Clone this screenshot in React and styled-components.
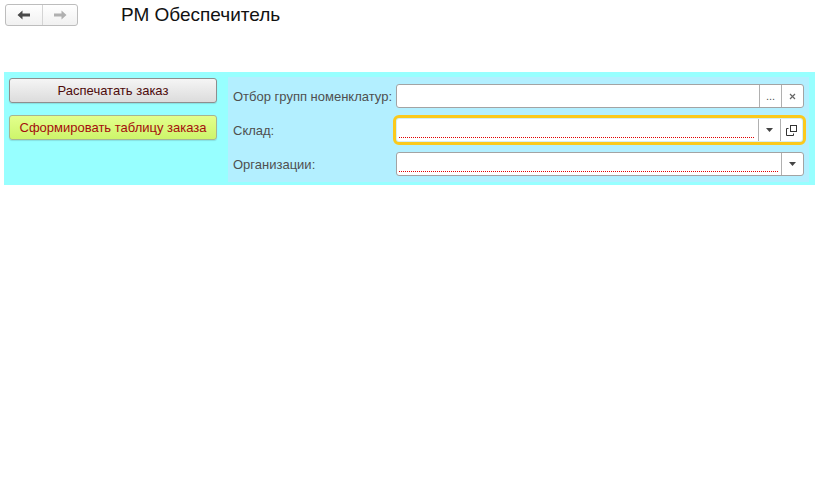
import React from "react";
import styled, { createGlobalStyle } from "styled-components";

const GlobalStyle = createGlobalStyle`
  html, body {
    margin: 0;
    padding: 0;
    background: #fff;
    font-family: "Liberation Sans", Arial, sans-serif;
    font-size: 13px;
  }
`;

const Page = styled.div`
  width: 820px;
  height: 499px;
  background: #fff;
`;

const Header = styled.header`
  display: flex;
  align-items: flex-start;
  height: 30px;
  padding: 4px 0 0 5px;
  box-sizing: border-box;
`;

const NavGroup = styled.div`
  display: flex;
  height: 22px;
  border: 1px solid #bdbdbd;
  border-radius: 3px;
  box-sizing: border-box;
  background: linear-gradient(#ffffff, #f1f1f1);
  overflow: hidden;
`;

const NavButton = styled.button`
  width: ${(p) => p.$w}px;
  height: 100%;
  border: none;
  border-left: ${(p) => (p.$divider ? "1px solid #d4d4d4" : "none")};
  background: transparent;
  padding: 0;
  display: flex;
  align-items: center;
  justify-content: center;
  color: ${(p) => (p.$disabled ? "#b0b0b0" : "#4a4a4a")};
`;

const Title = styled.h1`
  margin: -2px 0 0 43px;
  font-weight: normal;
  font-size: 19px;
  line-height: 26px;
  color: #111;
`;

const Panel = styled.section`
  margin: 42px 5px 0 4px;
  background: #97ffff;
  display: flex;
  align-items: stretch;
  gap: 11px;
  padding: 5px 6px 3px 5px;
`;

const LeftColumn = styled.div`
  width: 208px;
  display: flex;
  flex-direction: column;
  gap: 12px;
  padding-top: 1px;
`;

const ActionButton = styled.button`
  height: 25px;
  width: 100%;
  border: 1px solid ${(p) => (p.$accent ? "#a7b592" : "#8e8e8e")};
  border-radius: 3px;
  font-family: inherit;
  font-size: 13px;
  color: ${(p) => (p.$accent ? "#a50d0d" : "#4d0a0a")};
  background: ${(p) =>
    p.$accent
      ? "linear-gradient(#e3ff8c, #cdf56b)"
      : "linear-gradient(#f5f5f5, #dcdcdc)"};
  box-shadow: 0 1px 1px rgba(0, 0, 0, 0.12);
  padding: 0;
  cursor: pointer;
`;

const FormArea = styled.div`
  flex: 1;
  background: #b3efff;
  padding: 7px 5px 6px 5px;
  display: flex;
  flex-direction: column;
  gap: 10px;
`;

const Row = styled.div`
  display: flex;
  align-items: center;
  height: 24px;
`;

const Label = styled.label`
  width: 163px;
  color: #4f4f4f;
  font-size: 13px;
  white-space: nowrap;
`;

const Field = styled.div`
  flex: 1;
  height: 24px;
  box-sizing: border-box;
  display: flex;
  background: #fff;
  border: 1px solid ${(p) => (p.$focused ? "#d6eef5" : "#a3a3a3")};
  border-radius: 3px;
  outline: ${(p) => (p.$focused ? "3px solid #fbc91c" : "none")};
  outline-offset: 0;
  margin-right: ${(p) => (p.$focused ? "1px" : "0")};
`;

const Input = styled.div`
  flex: 1;
  position: relative;
  &::after {
    content: "";
    display: ${(p) => (p.$required ? "block" : "none")};
    position: absolute;
    left: 2px;
    right: 3px;
    bottom: 3px;
    height: 1px;
    background: repeating-linear-gradient(
      to right,
      #e00000 0 1px,
      transparent 1px 2px
    );
  }
`;

const FieldButton = styled.div`
  width: 21px;
  border-left: 1px solid #b0b0b0;
  display: flex;
  align-items: center;
  justify-content: center;
  color: #555;
  font-size: 11px;
`;

const ArrowLeft = () => (
  <svg width="14" height="10" viewBox="0 0 14 10">
    <path d="M0.5 5 L5.5 0.5 V3.5 H13 V6.5 H5.5 V9.5 Z" fill="currentColor" />
  </svg>
);

const ArrowRight = () => (
  <svg width="14" height="10" viewBox="0 0 14 10">
    <path d="M13.5 5 L8.5 0.5 V3.5 H1 V6.5 H8.5 V9.5 Z" fill="currentColor" />
  </svg>
);

const DropIcon = () => (
  <svg width="7" height="4" viewBox="0 0 7 4">
    <path d="M0 0 H7 L3.5 4 Z" fill="#444" />
  </svg>
);

const ClearIcon = () => (
  <svg width="7" height="7" viewBox="0 0 7 7">
    <path d="M1 1 L6 6 M6 1 L1 6" stroke="#666" strokeWidth="1.2" />
  </svg>
);

const OpenIcon = () => (
  <svg width="11" height="11" viewBox="0 0 11 11">
    <rect x="4.5" y="0.5" width="6" height="6" fill="none" stroke="#333" />
    <path d="M2.5 3.5 H0.5 V10.5 H7.5 V8.5" fill="none" stroke="#333" />
  </svg>
);

export default function App() {
  return (
    <Page>
      <GlobalStyle />
      <Header>
        <NavGroup>
          <NavButton $w={36}>
            <ArrowLeft />
          </NavButton>
          <NavButton $w={35} $divider $disabled>
            <ArrowRight />
          </NavButton>
        </NavGroup>
        <Title>РМ Обеспечитель</Title>
      </Header>
      <Panel>
        <LeftColumn>
          <ActionButton>Распечатать заказ</ActionButton>
          <ActionButton $accent>Сформировать таблицу заказа</ActionButton>
        </LeftColumn>
        <FormArea>
          <Row>
            <Label>Отбор групп номенклатур:</Label>
            <Field>
              <Input />
              <FieldButton>...</FieldButton>
              <FieldButton>
                <ClearIcon />
              </FieldButton>
            </Field>
          </Row>
          <Row>
            <Label>Склад:</Label>
            <Field $focused>
              <Input $required />
              <FieldButton>
                <DropIcon />
              </FieldButton>
              <FieldButton>
                <OpenIcon />
              </FieldButton>
            </Field>
          </Row>
          <Row>
            <Label>Организации:</Label>
            <Field>
              <Input $required />
              <FieldButton>
                <DropIcon />
              </FieldButton>
            </Field>
          </Row>
        </FormArea>
      </Panel>
    </Page>
  );
}
